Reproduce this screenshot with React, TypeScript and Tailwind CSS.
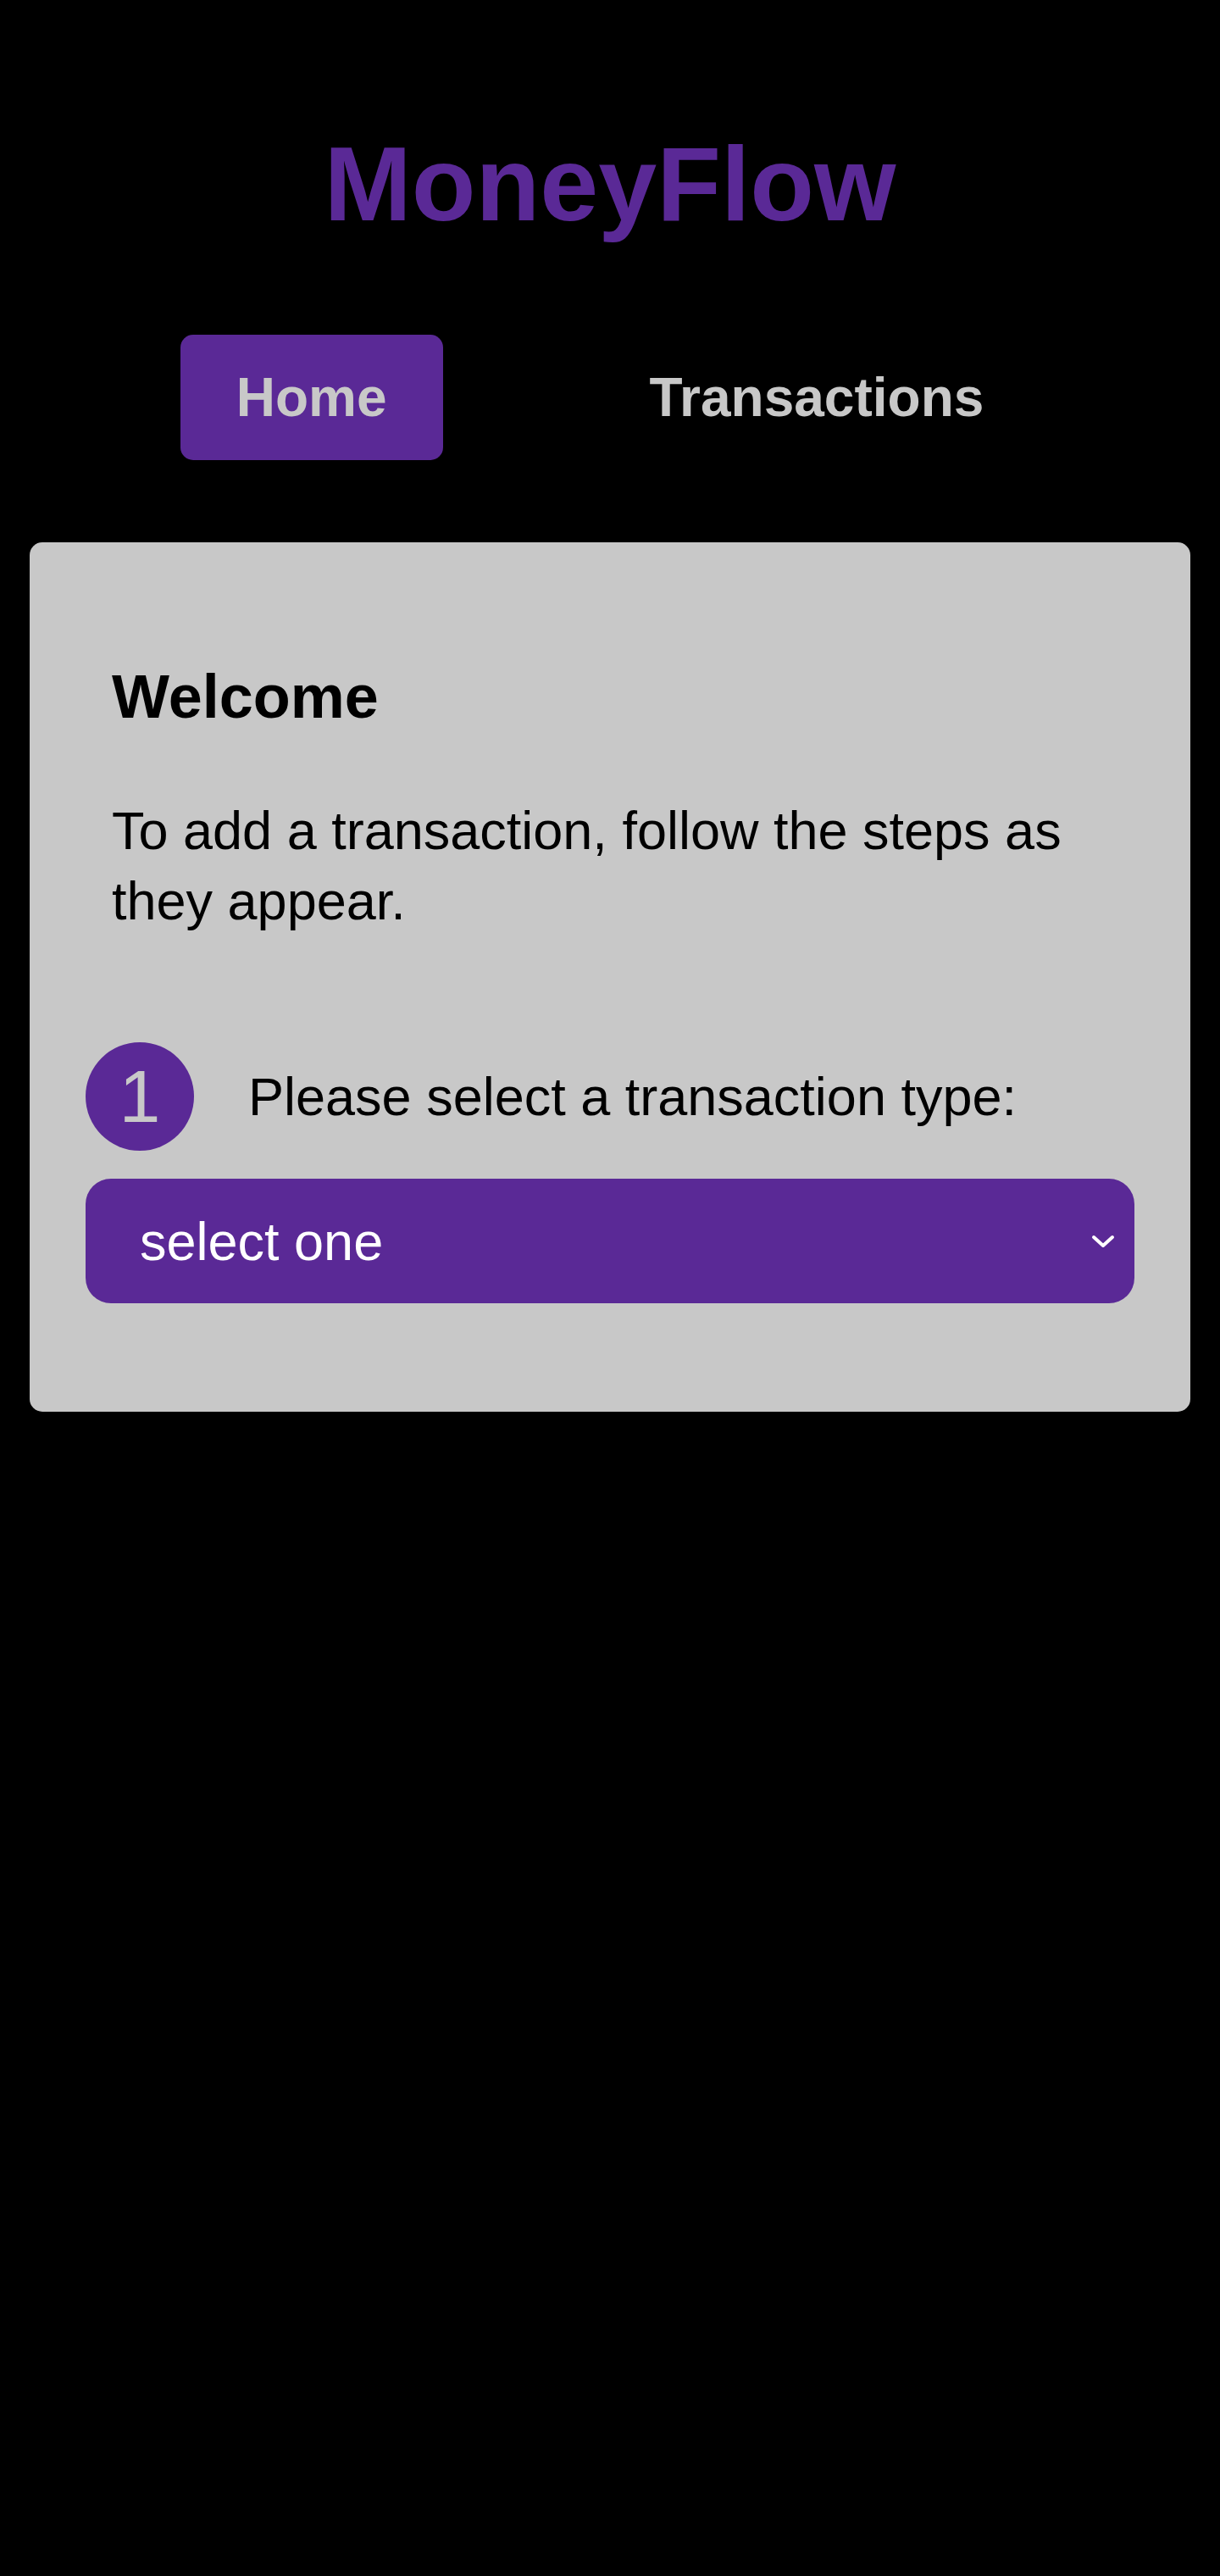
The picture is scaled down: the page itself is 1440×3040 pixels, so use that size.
import React from "react";

const purple = "bg-[#5a2996]";

function StepBadge({ n }: { n: number }) {
  return (
    <div
      className={`flex h-[128px] w-[128px] shrink-0 items-center justify-center rounded-full ${purple} text-[88px] leading-none text-[#c8c8c8]`}
    >
      {n}
    </div>
  );
}

function TypeSelect() {
  return (
    <div
      className={`mt-[33px] flex h-[147px] items-center justify-between rounded-[30px] ${purple} pl-[64px] pr-[22px] text-[63px] text-white`}
    >
      <span>select one</span>
      <svg width="30" height="19" viewBox="0 0 30 19" fill="none">
        <polyline
          points="4,5 15,15 26,5"
          stroke="white"
          strokeWidth="4"
          strokeLinecap="round"
          strokeLinejoin="round"
        />
      </svg>
    </div>
  );
}

export default function App() {
  return (
    <div className="min-h-[3040px] bg-black font-['Liberation_Sans',Arial,sans-serif]">
      <header className="pt-[146px] text-center">
        <h1 className="text-[124px] font-bold leading-[1.15] text-[#5a2996]">
          MoneyFlow
        </h1>
      </header>

      <nav className="mt-[106px] flex justify-center gap-[178px]">
        <a
          className={`flex h-[148px] items-center rounded-[15px] ${purple} px-[66px] text-[64px] font-bold text-[#c8c8c8]`}
        >
          Home
        </a>
        <a className="flex h-[148px] items-center rounded-[15px] px-[66px] text-[64px] font-bold text-[#c8c8c8]">
          Transactions
        </a>
      </nav>

      <main className="mx-[35px] mt-[97px] rounded-[15px] bg-[#c8c8c8] px-[66px] pb-[128px] pt-[141px] text-black">
        {/* intro */}
        <section className="pl-[31px]">
          <h2 className="text-[72px] font-bold leading-[1.15]">Welcome</h2>
          <p className="mt-[76px] text-[63px] leading-[83px]">
            To add a transaction, follow the steps as they appear.
          </p>
        </section>

        {/* step 1 */}
        <section className="mt-[125px]">
          <div className="flex items-center gap-[64px]">
            <StepBadge n={1} />
            <span className="text-[63px] leading-[1.15]">
              Please select a transaction type:
            </span>
          </div>
          <TypeSelect />
        </section>
      </main>
    </div>
  );
}
